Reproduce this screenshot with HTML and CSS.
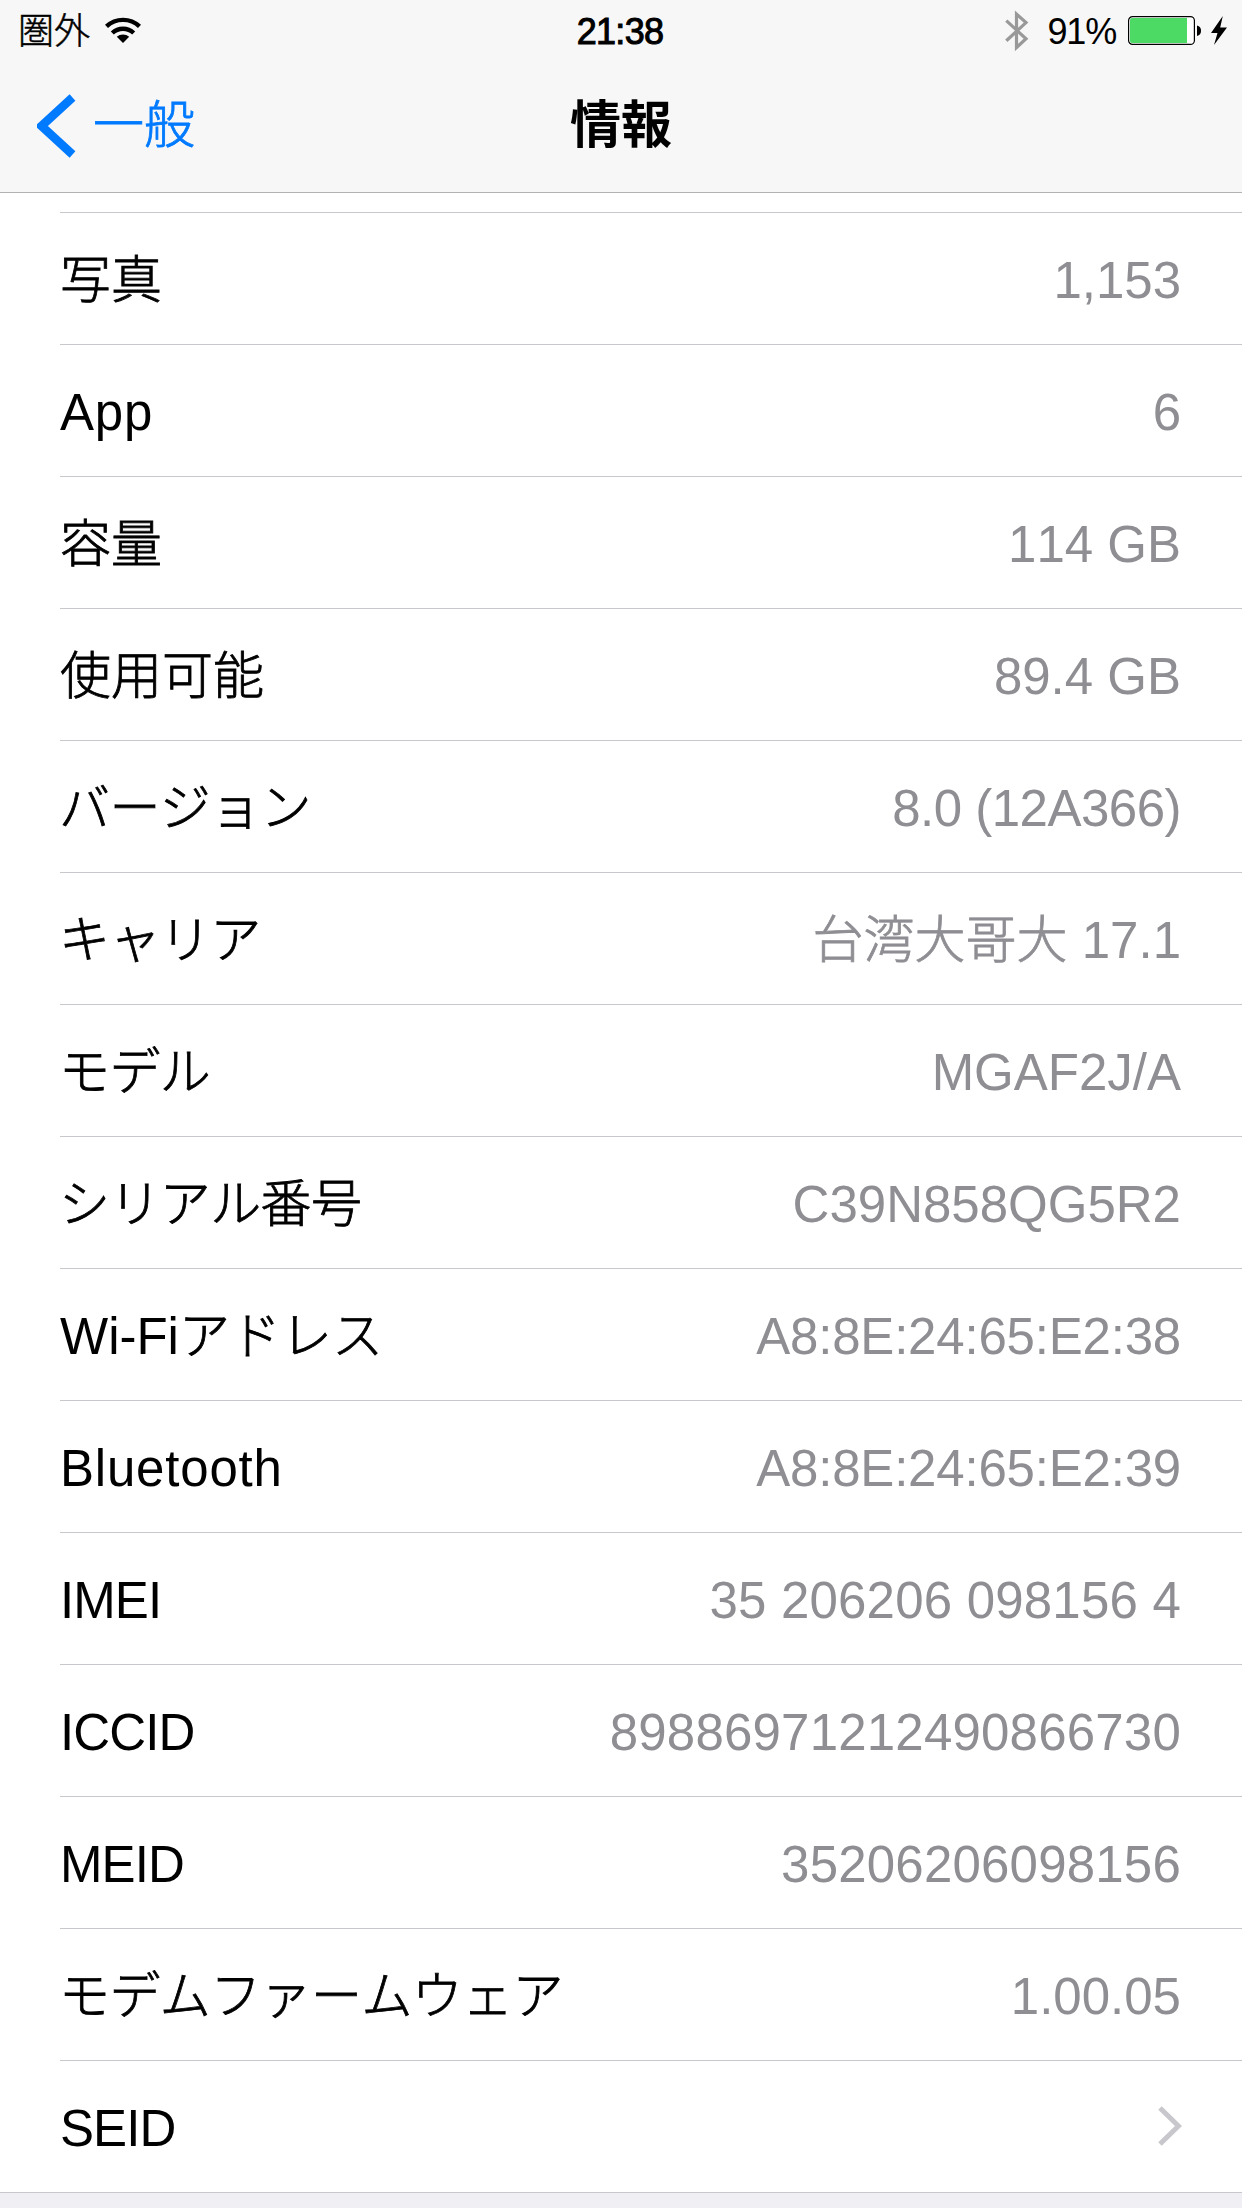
FILE: index.html
```html
<!DOCTYPE html>
<html lang="ja">

<head>
    <meta charset="UTF-8" />
    <meta name="viewport" content="width=device-width, initial-scale=1.0" />
    <title>情報</title>
    <link rel="stylesheet" href="styles.css">
</head>

<body>
    <header>
        <div class="status">
            <div class="status-left">
                <span>圏外</span>
                <svg class="wifi" width="36" height="28" viewBox="0 0 36 28">
                    <path d="M1.5 10.4 A24 24 0 0 1 34.5 10.4" fill="none" stroke="#000" stroke-width="4.4" />
                    <path d="M7.3 17 A15.5 15.5 0 0 1 28.7 17" fill="none" stroke="#000" stroke-width="4.4" />
                    <path d="M11.8 20.8 A9.2 9.2 0 0 1 24.2 20.8 L18 27 Z" />
                </svg>
            </div>
            <div class="time">21:38</div>
            <div class="status-right">
                <svg class="bluetooth" width="24" height="42" viewBox="0 0 24 42">
                    <path d="M1.3 10.6 L21 28.8 L11.5 37.5 V4 L21 12.6 L1.3 30.8" fill="none" stroke="#999" stroke-width="3.2" />
                </svg>
                <span class="percent">91%</span>
                <svg class="battery" width="74" height="30" viewBox="0 0 74 30">
                    <rect x="0.6" y="0.6" width="65.8" height="27.8" rx="4" fill="#fff" stroke="#000" stroke-width="1.2" />
                    <path d="M4 2 H59 V27 H4 Q2 27 2 25 V4 Q2 2 4 2 Z" fill="#4cd964" />
                    <path d="M69 9.5 Q73 10.5 73 14.7 Q73 19 69 20 Z" />
                </svg>
                <svg class="bolt" width="16" height="30" viewBox="0 0 16 30">
                    <path d="M11.8 0 L0 17 H6.5 L3 29 L16 11.5 H9.2 Z" />
                </svg>
            </div>
        </div>
        <nav>
            <a class="back">
                <svg width="39" height="64" viewBox="0 0 39 64">
                    <path d="M35.5 3.5 L4.5 32 L35.5 60.5" />
                </svg>
                <span>一般</span>
            </a>
            <h1>情報</h1>
        </nav>
    </header>

    <ul class="list">
        <li class="cut"></li>
        <li><span class="jp">写真</span><span class="value">1,153</span></li>
        <li><span class="word">App</span><span class="value">6</span></li>
        <li><span class="jp">容量</span><span class="value">114 GB</span></li>
        <li><span class="jp">使用可能</span><span class="value">89.4 GB</span></li>
        <li><span class="jp kana">バージョン</span><span class="value tight">8.0 (12A366)</span></li>
        <li><span class="jp kana">キャリア</span><span class="value"><span class="jp">台湾大哥大</span> 17.1</span></li>
        <li><span class="jp kana">モデル</span><span class="value">MGAF2J/A</span></li>
        <li><span class="jp kana">シリアル番号</span><span class="value">C39N858QG5R2</span></li>
        <li><span>Wi-Fi<span class="jp">アドレス</span></span><span class="value mac">A8:8E:24:65:E2:38</span></li>
        <li><span class="word">Bluetooth</span><span class="value mac">A8:8E:24:65:E2:39</span></li>
        <li><span class="caps">IMEI</span><span class="value number">35 206206 098156 4</span></li>
        <li><span class="caps">ICCID</span><span class="value number">89886971212490866730</span></li>
        <li><span class="caps">MEID</span><span class="value number">35206206098156</span></li>
        <li><span class="jp kana">モデムファームウェア</span><span class="value">1.00.05</span></li>
        <li>
            <span class="caps">SEID</span>
            <svg class="arrow" width="24" height="40" viewBox="0 0 24 40">
                <path d="M2 2 L20.5 20 L2 38" />
            </svg>
        </li>
    </ul>
</body>

</html>
```
FILE: styles.css
```css
body {
    margin: 0;
    height: 2208px;
    overflow: hidden;
    background: #efeff4;
    color: #000;
    font-family: "Liberation Sans", "Noto Sans CJK JP", sans-serif;
    font-size: 51px;
    font-kerning: none;
}

header {
    box-sizing: border-box;
    height: 193px;
    background: #f7f7f7;
    border-bottom: 1px solid #b2b2b2;
}

/* status bar */
.status {
    display: grid;
    grid-template-columns: 1fr auto 1fr;
    height: 60px;
    padding: 0 15px 0 18px;
    font-size: 36px;
    line-height: 64px;
}

.status-left,
.status-right {
    display: flex;
    align-items: flex-start;
}

.status-right {
    justify-content: flex-end;
}

.status-left span {
    font-weight: 300;
    -webkit-text-stroke: 0.5px;
}

.wifi {
    margin: 16px 0 0 15px;
}

.time {
    padding-right: 5px;
    letter-spacing: -0.7px;
    -webkit-text-stroke: 1px #000;
}

.bluetooth {
    margin: 10px 19px 0 0;
}

.percent {
    letter-spacing: -1.2px;
}

.battery {
    margin: 16px 0 0 12px;
}

.bolt {
    margin: 16px 0 0 9px;
}

/* navigation bar */
nav {
    display: grid;
    grid-template-columns: 1fr auto 1fr;
    height: 132px;
    line-height: 132px;
}

.back {
    display: flex;
    align-items: flex-start;
    padding-left: 37px;
    color: #007aff;
    font-weight: 300;
    -webkit-text-stroke: 0.8px;
}

.back svg {
    margin: 34px 17px 0 0;
}

.back path {
    fill: none;
    stroke: #007aff;
    stroke-width: 8.5;
}

h1 {
    margin: 0;
    font-size: 51px;
    font-weight: bold;
}

/* rows */
.list {
    margin: 0;
    padding: 0 0 0 60px;
    list-style: none;
    background: #fff;
    border-bottom: 1px solid #c8c7cc;
}

li {
    display: flex;
    justify-content: space-between;
    box-sizing: border-box;
    height: 132px;
    padding-right: 61px;
    line-height: 135px;
    border-bottom: 1px solid #c8c7cc;
    font-weight: 300;
}

li.cut {
    height: 20px;
}

li:last-child {
    height: 131px;
    border-bottom: none;
}

.jp {
    -webkit-text-stroke: 0.8px;
}

.kana {
    margin-left: -1px;
    letter-spacing: -0.6px;
}

.word {
    letter-spacing: 0.8px;
}

.caps {
    letter-spacing: -0.9px;
}

.value {
    color: #8e8e93;
}

.number {
    letter-spacing: 0.2px;
}

.mac {
    letter-spacing: -0.2px;
}

.tight {
    letter-spacing: -0.5px;
}

.arrow {
    margin: 45px -1px 0 0;
}

.arrow path {
    fill: none;
    stroke: #c7c7cc;
    stroke-width: 5;
}
```
